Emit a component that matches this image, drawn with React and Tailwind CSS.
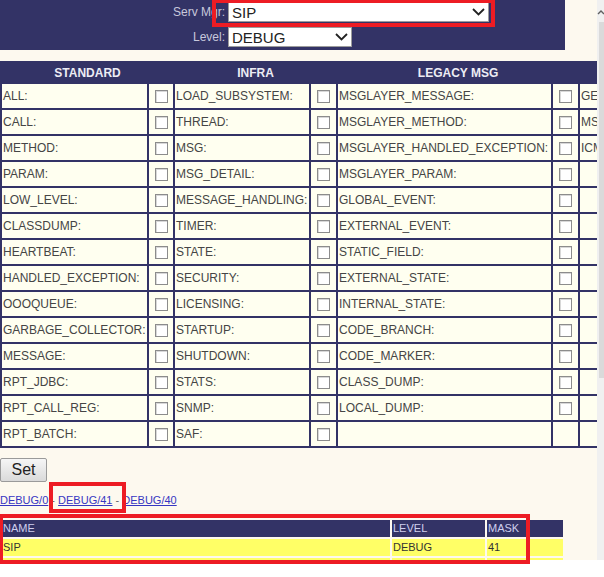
const rows = [
  ['ALL', 'LOAD_SUBSYSTEM', 'MSGLAYER_MESSAGE', 'GE'],
  ['CALL', 'THREAD', 'MSGLAYER_METHOD', 'MS'],
  ['METHOD', 'MSG', 'MSGLAYER_HANDLED_EXCEPTION', 'ICM'],
  ['PARAM', 'MSG_DETAIL', 'MSGLAYER_PARAM', ''],
  ['LOW_LEVEL', 'MESSAGE_HANDLING', 'GLOBAL_EVENT', ''],
  ['CLASSDUMP', 'TIMER', 'EXTERNAL_EVENT', ''],
  ['HEARTBEAT', 'STATE', 'STATIC_FIELD', ''],
  ['HANDLED_EXCEPTION', 'SECURITY', 'EXTERNAL_STATE', ''],
  ['OOOQUEUE', 'LICENSING', 'INTERNAL_STATE', ''],
  ['GARBAGE_COLLECTOR', 'STARTUP', 'CODE_BRANCH', ''],
  ['MESSAGE', 'SHUTDOWN', 'CODE_MARKER', ''],
  ['RPT_JDBC', 'STATS', 'CLASS_DUMP', ''],
  ['RPT_CALL_REG', 'SNMP', 'LOCAL_DUMP', ''],
  ['RPT_BATCH', 'SAF', '', ''],
];

function Box() {
  return <span className="block mx-auto w-[13px] h-[13px] border border-[#8c8c8c] bg-white shadow-[inset_1px_1px_0_#d8d8d8]" />;
}

function Select({ value, width }) {
  return (
    <div className={`${width} h-[20px] bg-white border border-[#9c9c9c] flex items-center justify-between pl-[3px] pr-[3px] text-[15px] leading-none text-[#222]`}>
      <span>{value}</span>
      <svg width="13" height="8" viewBox="0 0 13 8">
        <path d="M1 1l5.5 5.5L12 1" stroke="#222" strokeWidth="1.8" fill="none" />
      </svg>
    </div>
  );
}

function Label({ text }) {
  return (
    <td className="h-[24px] p-0 pl-[1px] bg-[#fffff0] text-[#454545] whitespace-nowrap overflow-hidden align-middle">
      {text ? `${text}:` : ''}
    </td>
  );
}

function Check({ show }) {
  return <td className="h-[24px] p-0 bg-[#fffff0] align-middle">{show && <Box />}</td>;
}

export default function App() {
  return (
    <div className="relative w-[604px] h-[577px] overflow-hidden bg-white font-['Liberation_Sans',Arial,sans-serif]">
      <div className="flex items-start">
        <main className="w-[597px] h-[560px] overflow-hidden bg-[#fdf9ef]">
          <div className="w-[565px] h-[50px] bg-[#333366] pt-[2px] flex flex-col gap-[5px]">
            <div className="flex items-center h-[20px]">
              <span className="w-[228px] pr-[3px] text-right text-[12px] text-[#c8c8dc]">Serv Mgr:</span>
              <Select value="SIP" width="w-[261px]" />
            </div>
            <div className="flex items-center h-[20px]">
              <span className="w-[228px] pr-[3px] text-right text-[12px] text-[#c8c8dc]">Level:</span>
              <Select value="DEBUG" width="w-[124px]" />
            </div>
          </div>

          <table className="mt-[11px] w-[689px] table-fixed border-separate border-spacing-[2px] bg-[#333366] text-[12px]">
            <colgroup>
              <col className="w-[145px]" />
              <col className="w-[24px]" />
              <col className="w-[134px]" />
              <col className="w-[25px]" />
              <col className="w-[213px]" />
              <col className="w-[25px]" />
              <col className="w-[80px]" />
              <col className="w-[25px]" />
            </colgroup>
            <thead>
              <tr>
                <th colSpan={2} className="h-[19px] p-0 font-bold text-[#ececf4] text-center">STANDARD</th>
                <th colSpan={2} className="h-[19px] p-0 font-bold text-[#ececf4] text-center">INFRA</th>
                <th colSpan={2} className="h-[19px] p-0 font-bold text-[#ececf4] text-center">LEGACY MSG</th>
                <th colSpan={2} className="h-[19px] p-0" />
              </tr>
            </thead>
            <tbody>
              {rows.map((r, i) => (
                <tr key={r[0]}>
                  <Label text={r[0]} />
                  <Check show />
                  <Label text={r[1]} />
                  <Check show />
                  <Label text={r[2]} />
                  <Check show={i < 13} />
                  <td className="h-[24px] p-0 pl-[1px] bg-[#fffff0] text-[#454545] whitespace-nowrap overflow-hidden align-middle">{r[3]}</td>
                  <Check show={false} />
                </tr>
              ))}
            </tbody>
          </table>

          <div className="mt-[10px]">
            <button type="button" className="w-[47px] h-[24px] border border-[#9a9a9a] rounded-[2px] bg-linear-to-b from-[#f6f6f6] to-[#dadada] text-[16px] leading-none text-[#222]">
              Set
            </button>
          </div>

          <div className="mt-[12px] text-[11px] leading-[13px] text-[#666]">
            <a href="#" className="text-[#3636c2] underline">DEBUG/0</a>
            {' - '}
            <a href="#" className="text-[#3636c2] underline">DEBUG/41</a>
            {' - '}
            <a href="#" className="text-[#3636c2] underline">DEBUG/40</a>
          </div>

          <table className="mt-[11px] w-[565px] table-fixed border-separate border-spacing-[2px] text-[11px]">
            <colgroup>
              <col className="w-[388px]" />
              <col className="w-[93px]" />
              <col className="w-[76px]" />
            </colgroup>
            <thead>
              <tr className="bg-[#333366] text-[#cfcfee]">
                <th className="h-[15px] p-0 pl-[1px] text-left font-normal">NAME</th>
                <th className="h-[15px] p-0 pl-[1px] text-left font-normal">LEVEL</th>
                <th className="h-[15px] p-0 pl-[1px] text-left font-normal">MASK</th>
              </tr>
            </thead>
            <tbody>
              <tr className="bg-[#ffff66] text-[#333]">
                <td className="h-[17px] p-0 pl-[1px]">SIP</td>
                <td className="h-[17px] p-0 pl-[1px]">DEBUG</td>
                <td className="h-[17px] p-0 pl-[1px]">41</td>
              </tr>
              <tr className="bg-[#ffff66]">
                <td className="h-[17px] p-0" />
                <td className="h-[17px] p-0" />
                <td className="h-[17px] p-0" />
              </tr>
            </tbody>
          </table>
        </main>

        <div className="w-[7px] h-[560px] bg-[#f0f0f0] flex flex-col items-end">
          <svg width="7" height="22" viewBox="0 0 7 22" className="shrink-0">
            <path d="M1 14l3-3 3 3" stroke="#606060" strokeWidth="1.4" fill="none" />
          </svg>
          <div className="w-[5px] h-[356px] bg-[#dadada]" />
        </div>
      </div>

      <div className="absolute left-[212px] top-[-1px] w-[283px] h-[28px] border-4 border-[#ed1c24]" />
      <div className="absolute left-[49px] top-[482px] w-[77px] h-[31px] border-4 border-[#ed1c24]" />
      <div className="absolute left-[-1px] top-[514px] w-[531px] h-[50px] border-4 border-[#ed1c24]" />
    </div>
  );
}
